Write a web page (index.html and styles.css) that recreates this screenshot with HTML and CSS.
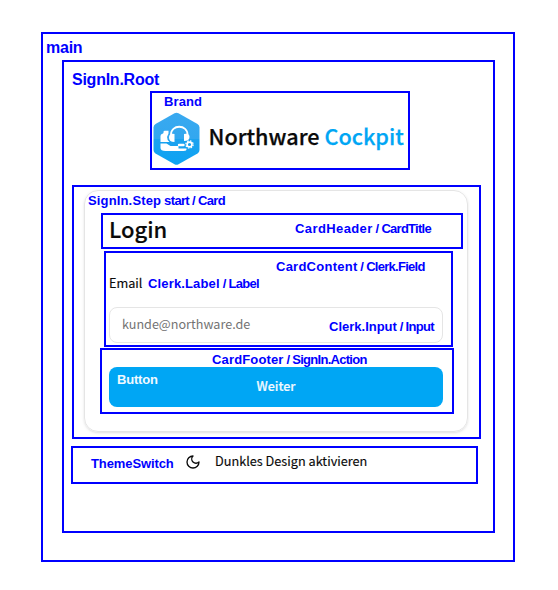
FILE: index.html
```html
<!DOCTYPE html>
<html lang="de">
<head>
<meta charset="utf-8">
<title>Northware Cockpit</title>
<link rel="stylesheet" href="styles.css">
</head>
<body>
<main class="outline main">
  <span class="tag tag-large tag-main">main</span>
  <div class="outline root">
    <span class="tag tag-large tag-root">SignIn.Root</span>
    <div class="outline brand">
      <span class="tag tag-brand">Brand</span>
      <svg class="logo" width="49" height="54" viewBox="0 0 48 54">
        <defs><linearGradient id="g" x1="0" y1="0" x2="0" y2="1"><stop offset="0" stop-color="#39a9f0"/><stop offset=".5" stop-color="#32a7ef"/><stop offset=".51" stop-color="#1ba2ef"/><stop offset="1" stop-color="#0da3f3"/></linearGradient></defs>
        <path d="M22 1.3Q24 .2 26 1.3L45 12Q47 13.2 47 15.5V38Q47 40.3 45 41.5L26 52.3Q24 53.4 22 52.3L3 41.5Q1 40.3 1 38V15.5Q1 13.2 3 12Z" fill="url(#g)"/>
        <path d="M18.5 23C18 12 35.5 12 35 23" fill="none" stroke="#fff" stroke-width="1.8"/>
        <path d="M22 22Q16.5 21 16.5 25.5T22 30Z" fill="#fff"/>
        <path d="M31.5 22Q37 21 37 25T31.5 29Z" fill="#fff"/>
        <path d="M11 21V20Q11 18.7 12.3 18.7H16V21.5L14.5 25Q14.5 28 17 30H8V24Q8 22 10 21.7Z" fill="#fff"/>
        <path d="M8 31.5H14L18 34H26V36.5H34Q34.500 39 31 39H13Q8 39 8 36Z" fill="#fff"/>
        <path d="M26.500 33H31" fill="none" stroke="#fff" stroke-width="2.4" stroke-linecap="round"/>
        <circle cx="37" cy="32.500" r="2.4" fill="none" stroke="#fff" stroke-width="1.6"/>
        <circle cx="37" cy="32.500" r="3.6" fill="none" stroke="#fff" stroke-width="1.3" stroke-dasharray="1.5 1.33"/>
      </svg>
      <span class="brand-name">Northware <span class="accent">Cockpit</span></span>
    </div>
    <div class="outline step">
      <span class="tag tag-step"><span class="w2">SignIn.Step</span><span class="t5"> start / Card</span></span>
      <div class="card">
        <div class="outline card-header">
          <h1 class="title">Login</h1>
          <span class="tag tag-header"><span class="w4">CardHeader</span> / CardTitle</span>
        </div>
        <div class="outline card-content">
          <label class="label" for="email">Email</label>
          <span class="tag tag-label"><span class="w2">Clerk.Label</span> / Label</span>
          <input class="input" id="email" type="email" placeholder="kunde@northware.de">
          <span class="tag tag-content"><span class="w3">CardContent</span> / Clerk.Field</span>
          <span class="tag tag-input"><span class="w0">Clerk.Input</span> / Input</span>
        </div>
        <div class="outline card-footer">
          <span class="tag tag-footer"><span class="w2">CardFooter</span> / SignIn.Action</span>
          <button class="button" type="button">Weiter</button>
          <span class="tag tag-button">Button</span>
        </div>
      </div>
    </div>
    <div class="outline theme">
      <span class="tag tag-theme">ThemeSwitch</span>
      <svg class="moon" width="16" height="16" viewBox="0 0 24 24" fill="none" stroke="#0a0a0a" stroke-width="2" stroke-linecap="round" stroke-linejoin="round"><path d="M12 3a6 6 0 0 0 9 9 9 9 0 1 1-9-9Z"/></svg>
      <span class="theme-text">Dunkles Design aktivieren</span>
    </div>
  </div>
</main>
</body>
</html>
```
FILE: styles.css
```css
* { box-sizing: border-box; }
body {
  margin: 0;
  padding: 32px 0 0 41px;
  background: #fff;
  color: #0a0a0a;
  font-family: "Noto Sans CJK JP", "Noto Sans", sans-serif;
  font-size: 12.7px;
}
.outline { position: relative; border: 2px solid #00f; }
.main { width: 474px; height: 530px; padding: 26px 0 0 19px; }
.root { width: 433px; height: 473px; padding-top: 29px; }
.brand {
  display: flex;
  align-items: center;
  gap: 7.5px;
  width: 260px;
  height: 79px;
  margin-left: 86px;
  padding: 16px 0 0;
}
.logo { flex: none; }
.brand-name {
  padding-bottom: 6px;
  font-size: 21.65px;
  line-height: 32px;
  font-weight: 500;
  -webkit-text-stroke: .25px currentColor;
  white-space: nowrap;
}
.accent { color: #00a6f4; }
.step { width: 409px; height: 254px; margin: 15px 0 0 8px; padding: 3px 0 0 10px; }
.card {
  width: 384px;
  height: 242px;
  padding: 22px 0 0 15px;
  border: 1px solid #e5e5e5;
  border-radius: 14px;
  box-shadow: 0 1px 3px rgba(0, 0, 0, .1), 0 1px 2px -1px rgba(0, 0, 0, .1);
}
.card-header { width: 362px; height: 36px; margin-left: 1px; padding-left: 6px; }
.title {
  margin: 0;
  font-size: 22px;
  line-height: 26px;
  font-weight: 500;
  -webkit-text-stroke: .15px currentColor;
}
.card-content {
  width: 349px;
  height: 96px;
  margin: 2px 0 0 4px;
  padding: 20px 0 0 3px;
}
.label { display: block; height: 34px; line-height: 20px; -webkit-text-stroke: .15px currentColor; }
.input {
  display: block;
  width: 334px;
  height: 36px;
  padding: 0 12px 4px;
  border: 1px solid #e5e5e5;
  border-radius: 8px;
  background: #fff;
  font: inherit;
  font-size: 12.6px;
}
.input::placeholder { color: #737373; opacity: 1; }
.card-footer { width: 354px; height: 66px; margin-top: 1px; padding: 17px 0 0 7px; }
.button {
  display: block;
  width: 334px;
  height: 40px;
  padding: 0 0 4px;
  border: 0;
  border-radius: 8px;
  background: #00a6f4;
  color: #f0f9ff;
  font: inherit;
  font-size: 12.6px;
  font-weight: 500;
  -webkit-text-stroke: .2px currentColor;
}
.theme {
  display: flex;
  width: 407px;
  height: 38px;
  margin: 7px 0 0 7px;
  padding: 6px 0 0 112px;
}
.moon { margin-right: 14px; }
.theme-text { line-height: 20px; margin-top: -3px; -webkit-text-stroke: .15px currentColor; }

/* annotation labels over the outlined regions */
.tag {
  position: absolute;
  color: #00f;
  font: bold 13px/15px "Liberation Sans", sans-serif;
  letter-spacing: -.72px;
  white-space: pre;
}
.tag-large { font-size: 16px; line-height: 18px; letter-spacing: -.25px; }
.tag-main { left: 3px; top: 5px; }
.tag-root { left: 8px; top: 9px; }
.tag-brand { left: 12px; top: 1px; letter-spacing: .1px; }
.tag-step { left: 14px; top: 6px; z-index: 1; }
.tag-header { left: 192px; top: 6px; }
.tag-content { left: 170px; top: 6px; }
.tag-label { left: 42px; top: 23px; }
.tag-input { left: 223px; top: 66px; }
.tag-footer { left: 110px; top: 2px; }
.tag-button { left: 15px; top: 22px; color: #f0f9ff; letter-spacing: -.2px; }
.tag-theme { left: 18px; top: 8px; letter-spacing: -.1px; }
.w0 { letter-spacing: 0; }
.w2 { letter-spacing: .15px; }
.w3 { letter-spacing: .25px; }
.w4 { letter-spacing: .4px; }
.t5 { letter-spacing: -.65px; }
```
